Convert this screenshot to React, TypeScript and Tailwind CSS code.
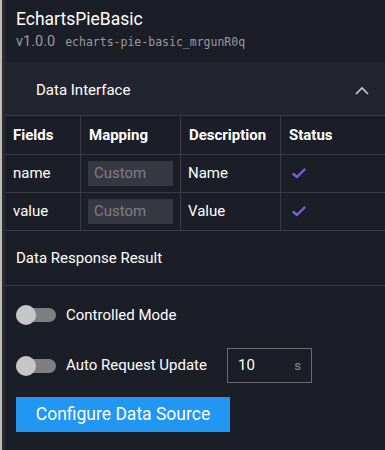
const rows = [
  { field: 'name', desc: 'Name' },
  { field: 'value', desc: 'Value' },
];

const Check = () => (
  <svg width="14" height="11" viewBox="0 0 14 11" fill="none">
    <path d="M1.5 6 L5 9 L12.5 1.5" stroke="#7a5fd3" strokeWidth="2.4" strokeLinecap="round" strokeLinejoin="round" />
  </svg>
);

const Toggle = () => (
  <div className="relative w-[40px] h-[20px] flex items-center shrink-0">
    <div className="w-[40px] h-[14px] rounded-full bg-[#7e7f84]" />
    <div className="absolute left-0 top-0 w-[20px] h-[20px] rounded-full bg-[#c6c6c8]" />
  </div>
);

const App = () => {
  return (
    <div
      className="w-[385px] h-[450px] flex bg-[#1c1e27] overflow-hidden"
      style={{ fontFamily: 'Roboto, "Liberation Sans", sans-serif' }}
    >
      <div className="w-[2px] bg-[#bdbdbd] shrink-0" />
      <div className="w-[3px] bg-[#2a2b2f] shrink-0" />
      <div className="flex-1 flex flex-col">
        <div className="px-[11px] pt-[7px] h-[62px]">
          <div className="text-[17.5px] leading-[25px] text-white">EchartsPieBasic</div>
          <div className="flex items-baseline gap-[10px] text-[#9a9ba0]">
            <span className="text-[14.5px] leading-[19px]">v1.0.0</span>
            <span className="text-[11.5px]" style={{ fontFamily: '"DejaVu Sans Mono", monospace' }}>
              echarts-pie-basic_mrgunR0q
            </span>
          </div>
        </div>

        <div className="h-[53px] bg-[#22252f] flex items-center justify-between pl-[31px] pr-[16px] pt-[3px]">
          <span className="text-[15px] text-white">Data Interface</span>
          <svg width="14" height="9" viewBox="0 0 14 9" fill="none">
            <path d="M1 8 L7 2 L13 8" stroke="#c8c9cc" strokeWidth="1.6" />
          </svg>
        </div>

        <div className="grid grid-cols-[76px_100px_100px_1fr] text-[15px] text-white border-t border-[#3a3c45]">
          {['Fields', 'Mapping', 'Description', 'Status'].map((h, i) => (
            <div
              key={h}
              className={`h-[39px] flex items-center px-[8px] font-bold border-b border-[#3a3c45] ${i < 3 ? 'border-r' : ''}`}
            >
              {h}
            </div>
          ))}
          {rows.map(r => (
            <>
              <div key={r.field + 'f'} className="h-[38px] flex items-center px-[8px] border-b border-r border-[#3a3c45]">
                {r.field}
              </div>
              <div key={r.field + 'm'} className="h-[38px] flex items-center px-[7px] border-b border-r border-[#3a3c45]">
                <div className="w-[87px] h-[25px] bg-[#373942] flex items-center px-[6px] text-[#7d7f86]">Custom</div>
              </div>
              <div key={r.field + 'd'} className="h-[38px] flex items-center px-[7px] border-b border-r border-[#3a3c45]">
                {r.desc}
              </div>
              <div key={r.field + 's'} className="h-[38px] flex items-center pl-[11px] border-b border-[#3a3c45]">
                <Check />
              </div>
            </>
          ))}
        </div>

        <div className="h-[55px] flex items-center px-[11px] pt-[1px] text-[15px] text-white border-b border-[#3a3c45]">
          Data Response Result
        </div>

        <div className="px-[11px] pt-[18px] flex flex-col">
          <div className="flex items-center gap-[10px] h-[22px]">
            <Toggle />
            <span className="text-[15px] text-white">Controlled Mode</span>
          </div>
          <div className="flex items-center mt-[22px]">
            <Toggle />
            <span className="text-[15px] text-white ml-[10px]">Auto Request Update</span>
            <div className="ml-[20px] w-[85px] h-[35px] border border-[#6b6c72] flex items-center justify-between pl-[10px] pr-[10px]">
              <span className="text-[15px] text-white">10</span>
              <span className="text-[13px] text-[#8a8b90]">s</span>
            </div>
          </div>
          <div className="mt-[14px] w-[214px] h-[35px] bg-[#2196f3] flex items-center justify-center text-[17.5px] text-white">
            Configure Data Source
          </div>
        </div>
      </div>
    </div>
  );
};

export default App;
